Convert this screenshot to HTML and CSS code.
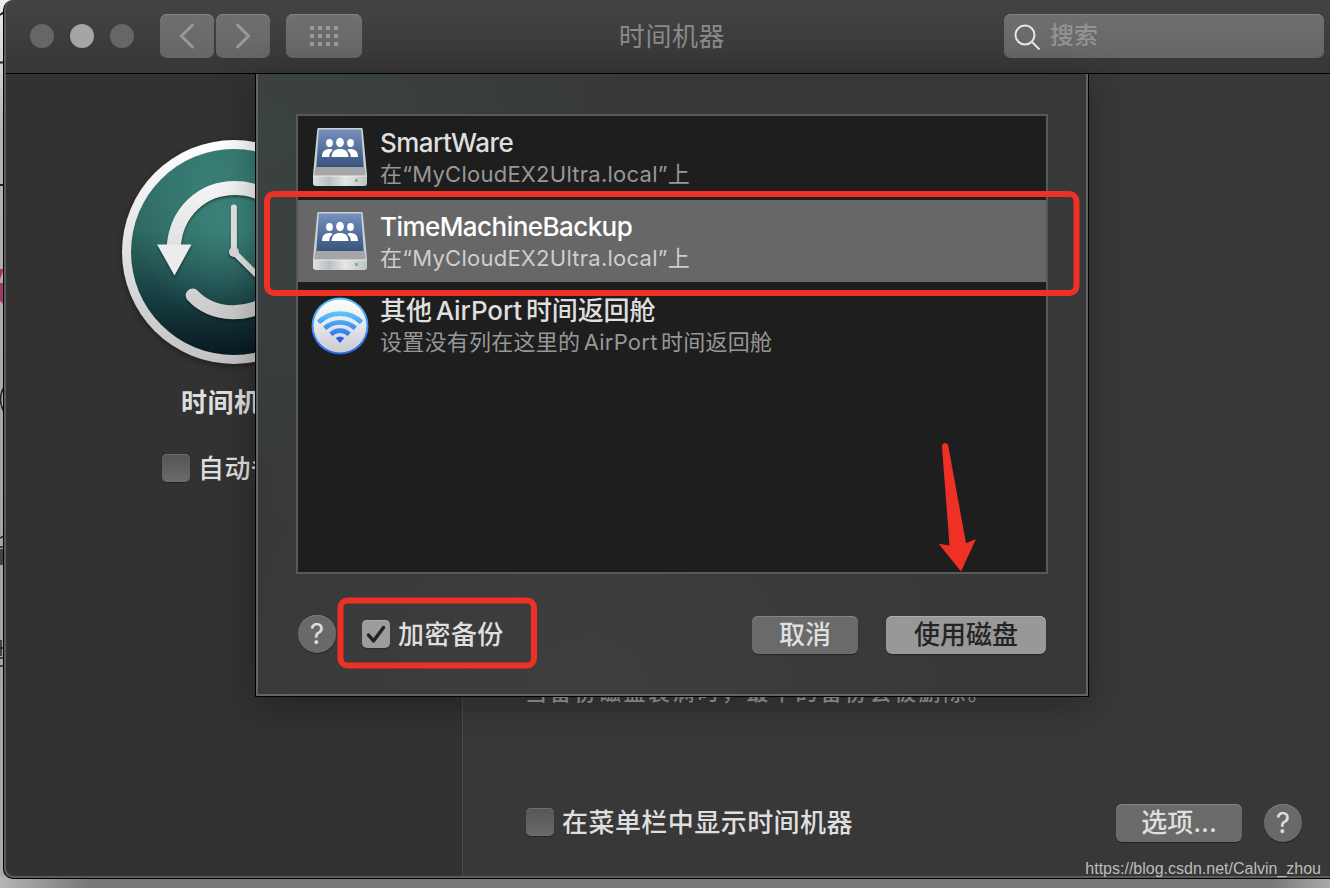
FILE: index.html
```
<!DOCTYPE html>
<html lang="zh-CN">
	<head>
		<meta charset="UTF-8">
		<title>时间机器</title>
		<link rel="stylesheet" href="styles.css">
	</head>
	<body>
		<svg class="behind" width="4" height="888" viewBox="0 0 4 888">
			<path d="M0 15l4-3M0 62.500h4M0 185h4" stroke="#222" stroke-width="2"/>
			<path d="M0 269h4l-4 10zM0 283h4v22l-4-4z" fill="#a03a68"/>
			<path d="M4 387q-7 12 0 25M0 538l4-2M0 547h4M1 549v16M3 549v16M0 648h4M1 640v16M0 658h4v8h-4" fill="none" stroke="#222" stroke-width="1.500"/>
		</svg>
		<div class="window">
			<div class="toolbar">
				<div class="lights"><i></i><i class="on"></i><i></i></div>
				<div class="nav">
					<span class="tool"><svg width="54" height="44"><path d="M32.500 11L21.500 22l11 11"/></svg></span>
					<span class="tool"><svg width="54" height="44"><path d="M21.500 11l11 11-11 11"/></svg></span>
				</div>
				<span class="tool grid"><svg width="76" height="44"><path d="M24 14h29M24 22h29M24 30h29" stroke-dasharray="4 4"/></svg></span>
				<h1>时间机器</h1>
				<div class="search">
					<svg width="28" height="28" viewBox="0 0 28 28"><circle cx="11" cy="12" r="9.500"/><path d="M18 19l7.500 7.500"/></svg>
					<span>搜索</span>
				</div>
			</div>
			<div class="content">
				<div class="side">
					<svg class="clock" width="240" height="240" viewBox="114 132 240 240">
						<defs>
							<linearGradient id="rim" x1="0" y1="0" x2="0" y2="1">
								<stop offset="0" stop-color="#fff"/><stop offset="1" stop-color="#c3c3c3"/>
							</linearGradient>
							<linearGradient id="face" x1="0" y1="0" x2="0" y2="1">
								<stop offset="0" stop-color="#34756d"/><stop offset="0.400" stop-color="#2d6660"/><stop offset="0.650" stop-color="#1c4748"/><stop offset="1" stop-color="#071a22"/>
							</linearGradient>
							<radialGradient id="glow" cx="0.5" cy="0.35" r="0.5">
								<stop offset="0" stop-color="#479a8f" stop-opacity="0.600"/><stop offset="1" stop-color="#479a8f" stop-opacity="0"/>
							</radialGradient>
							<linearGradient id="hand" gradientUnits="userSpaceOnUse" x1="0" y1="180" x2="0" y2="320">
								<stop offset="0" stop-color="#f6f6f6"/><stop offset="1" stop-color="#c9c9c9"/>
							</linearGradient>
						</defs>
						<circle cx="234" cy="252" r="112" fill="url(#rim)"/>
						<circle cx="234" cy="252" r="103" fill="url(#face)"/>
						<circle cx="234" cy="252" r="103" fill="url(#glow)"/>
						<g class="hands">
							<path d="M173.700 247C176 212 202 188 235 188c34 0 61 28 61 62" fill="none" stroke="url(#hand)" stroke-width="14"/>
							<path d="M157 244.500h34.500L174.500 275.500z" fill="#ececec"/>
							<path d="M192.700 295.500C213 317 250 318 275 297" fill="none" stroke="url(#hand)" stroke-width="14" stroke-linecap="round"/>
							<path d="M233.900 207.500V252l30 30" fill="none" stroke="#e4e4e4" stroke-width="6" stroke-linecap="round"/>
							<circle cx="234" cy="252" r="5" fill="#dcdcdc"/>
						</g>
					</svg>
					<b>时间机器</b>
					<label><i class="check"></i>自动备份</label>
				</div>
				<div class="main">
					<p>当备份磁盘装满时，最早的备份会被删除。</p>
					<div class="bottom">
						<label><i class="check"></i>在菜单栏中显示时间机器</label>
						<span class="btn options">选项...</span>
						<span class="help">?</span>
					</div>
				</div>

				<div class="sheet">
					<ul class="disks">
						<li>
							<svg width="60" height="62" viewBox="0 0 60 62">
								<defs>
									<linearGradient id="blue" x1="0" y1="0" x2="0" y2="1">
										<stop offset="0" stop-color="#7590bc"/><stop offset="1" stop-color="#38557f"/>
									</linearGradient>
									<linearGradient id="front" x1="0" y1="0" x2="1" y2="0">
										<stop offset="0" stop-color="#dce1e3"/><stop offset="0.300" stop-color="#b9bfc1"/><stop offset="0.600" stop-color="#e6e6e6"/><stop offset="1" stop-color="#bcc3c2"/>
									</linearGradient>
									<g id="drive">
										<path d="M8.500 2h43q1 0 1.200 1L57 49v8q0 3-3 3H6q-3 0-3-3v-8L7.300 3q.2-1 1.200-1z" fill="#c9d2d5"/>
										<path d="M5.500 40.500h49L56 51H4z" fill="#a6a6a6"/>
										<path d="M8.800 3.500h42.400L53.700 41H6.300z" fill="url(#blue)"/>
										<path d="M3.300 50h53.400v7q0 2.500-2.700 2.500H6q-2.700 0-2.700-2.500z" fill="url(#front)"/>
										<path d="M3.500 50h53" stroke="#eee"/>
										<path d="M45 53h3v3h-3z" fill="#7cbb70"/>
										<g fill="#fff">
											<ellipse cx="19.500" cy="17" rx="3.400" ry="4"/>
											<ellipse cx="40.500" cy="17" rx="3.400" ry="4"/>
											<path d="M12 31c0-6 3-8 8-8 2.500 0 3 1 2 2-2 1.500-2.500 3-2.800 6zM48 31c0-6-3-8-8-8-2.500 0-3 1-2 2 2 1.500 2.500 3 2.800 6z"/>
											<ellipse cx="30" cy="16.500" rx="3.900" ry="4.700"/>
											<path d="M21.500 31c.5-6 3.500-8 8.500-8s8 2 8.500 8z"/>
										</g>
									</g>
								</defs>
								<use href="#drive"/>
							</svg>
							<div><strong class="name">SmartWare</strong><em>在<q>“</q>MyCloudEX2Ultra.local<q>”</q>上</em></div>
						</li>
						<li class="selected">
							<svg width="60" height="62" viewBox="0 0 60 62"><use href="#drive"/></svg>
							<div><strong class="name">TimeMachineBackup</strong><em>在<q>“</q>MyCloudEX2Ultra.local<q>”</q>上</em></div>
						</li>
						<li>
							<svg width="60" height="62" viewBox="310 294 60 62">
								<defs>
									<linearGradient id="ring" x1="0" y1="0" x2="0" y2="1">
										<stop offset="0" stop-color="#58c4fa"/><stop offset="1" stop-color="#2a63ea"/>
									</linearGradient>
									<linearGradient id="plate" x1="0" y1="0" x2="0" y2="1">
										<stop offset="0" stop-color="#fff"/><stop offset="1" stop-color="#cbccd4"/>
									</linearGradient>
									<linearGradient id="wave" gradientUnits="userSpaceOnUse" x1="0" y1="311" x2="0" y2="343">
										<stop offset="0" stop-color="#5bcaf8"/><stop offset="1" stop-color="#2460ec"/>
									</linearGradient>
								</defs>
								<circle cx="340" cy="326" r="28.500" fill="url(#ring)"/>
								<circle cx="340" cy="326" r="26.500" fill="url(#plate)"/>
								<g fill="none" stroke="url(#wave)" stroke-width="4.800">
									<path d="M318.500 322.300a31 31 0 0 1 43 0"/>
									<path d="M324.700 328.300a22.500 22.500 0 0 1 30.600 0"/>
									<path d="M330.800 334.300a13.500 13.500 0 0 1 18.400 0"/>
								</g>
								<path d="M335.700 338q4.300-3 8.600 0L340 343z" fill="#2460ec"/>
							</svg>
							<div><strong class="other">其他 AirPort 时间返回舱</strong><em class="hint">设置没有列在这里的 AirPort 时间返回舱</em></div>
						</li>
					</ul>
					<div class="actions">
						<span class="help">?</span>
						<label><i class="check checked"><svg width="28" height="28"><path d="M6.500 15l5 6L21.500 7.500"/></svg></i>加密备份</label>
						<span class="btn cancel">取消</span>
						<span class="btn use">使用磁盘</span>
					</div>
				</div>
			</div>
		</div>

		<svg class="marks" width="1330" height="888">
			<rect x="267" y="194" width="809.500" height="99" rx="7"/>
			<rect x="340.500" y="600.500" width="193.500" height="65" rx="7"/>
			<path d="M942 447q0-4 3-4t3.500 4L966 543.300l10-4.300-15 32.500-22.300-27.800 10.800 1.800z"/>
		</svg>
		<span class="watermark">https://blog.csdn.net/Calvin_zhou</span>
	</body>
</html>
```
FILE: styles.css
```
*{
	box-sizing: border-box;
}
body{
	margin: 0;
	height: 888px;
	overflow: hidden;
	position: relative;
	background: linear-gradient(90deg,#b5b5b5,#777 90px,#777 1270px,#aaa) 0 100%/100% 12px no-repeat,
		linear-gradient(#eee,#b4b4b4 130px,#a5a5a5 500px,#aaa);
	font: 26px/32px Inter,"Noto Sans CJK SC",sans-serif;
	color: #dfdfdf;
}
svg{
	display: block;
}
i,em{
	font-style: normal;
}
.behind{
	position: absolute;
	left: 0;
	top: 0;
}
.window{
	position: relative;
	width: 1340px;
	height: 879px;
	margin-left: 3px;
	padding: 0 0 2px 2px;
	border: 1px solid #000;
	border-top: 0;
	border-radius: 10px;
	background: #5b5b5b;
	overflow: hidden;
}
.toolbar{
	display: flex;
	align-items: center;
	width: 1324px;
	height: 74px;
	padding: 0 6px 2px 24px;
	border-bottom: 1px solid #000;
	background: linear-gradient(#444,#363636);
	border-radius: 8px 0 0 0;
}
.lights{
	display: flex;
	gap: 16px;
	margin-right: 26px;
}
.lights i{
	width: 24px;
	height: 24px;
	border-radius: 50%;
	background: #666;
}
.lights .on{
	background: #a5a5a5;
}
.nav{
	display: flex;
	gap: 2px;
	margin-right: 16px;
}
.tool,.search{
	height: 44px;
	border-radius: 7px;
	background: linear-gradient(#6f6f6f,#666);
	box-shadow: inset 0 1px #858585;
}
.tool path{
	fill: none;
	stroke: #999;
	stroke-width: 3;
	stroke-linecap: round;
}
.grid path{
	stroke-width: 4;
	stroke-linecap: butt;
}
h1{
	flex: 1;
	margin: 0;
	padding: 2px 22px 0 0;
	text-align: center;
	font-size: 26px;
	font-weight: 400;
	letter-spacing: .6px;
	color: #8a8a8a;
}
.search{
	display: flex;
	align-items: center;
	width: 320px;
	padding-left: 10px;
	font-size: 24px;
	font-weight: 500;
	color: #939393;
}
.search svg{
	margin: 2px 8px 0 0;
	fill: none;
	stroke: #e8e8e8;
	stroke-width: 2;
}
.content{
	position: relative;
	display: flex;
	width: 1324px;
	height: 802px;
}
.side{
	width: 457px;
	padding-top: 58px;
	border-right: 1px solid #4a4a4a;
	background: #323232;
	border-radius: 0 0 0 8px;
}
.clock{
	margin-left: 108px;
	filter: drop-shadow(0 2px 3px rgba(0,0,0,.4));
}
.hands{
	filter: drop-shadow(0 2px 1px rgba(0,0,0,.4));
}
.side b{
	display: block;
	width: 104px;
	margin: 15px 0 34px 175px;
	font-weight: 700;
	letter-spacing: .5px;
	white-space: nowrap;
}
label{
	display: flex;
	align-items: center;
	white-space: nowrap;
	font-weight: 500;
	letter-spacing: .45px;
}
.side label{
	margin-left: 156px;
}
.check{
	width: 28px;
	height: 28px;
	margin: 0 8px 2px 0;
	border-radius: 5px;
	background: linear-gradient(#555,#6b6b6b);
	box-shadow: inset 0 1px #707070,0 1px 1px rgba(0,0,0,.3);
}
.checked{
	background: #9c9c9c;
	box-shadow: inset 0 1px #adadad,0 1px 1px rgba(0,0,0,.3);
}
.checked path{
	fill: none;
	stroke: #222;
	stroke-width: 3.5;
	stroke-linecap: round;
	stroke-linejoin: round;
}
.main{
	flex: 1;
	display: flex;
	flex-direction: column;
	justify-content: flex-end;
	background: #383838;
}
.main p{
	margin: 0 0 96px 62px;
	font-size: 22px;
	font-weight: 500;
	letter-spacing: 2.6px;
	color: #9b9b9b;
	white-space: nowrap;
}
.bottom{
	display: flex;
	align-items: center;
	padding: 0 28px 34px 63px;
}
.btn{
	height: 38px;
	border-radius: 6px;
	background: #6a6a6a;
	box-shadow: inset 0 1px #868686,0 1px 1px rgba(0,0,0,.4);
	line-height: 38px;
	font-weight: 500;
	text-align: center;
}
.options{
	width: 126px;
	margin: 0 22px 0 auto;
}
.help{
	width: 38px;
	height: 38px;
	border-radius: 50%;
	background: #696969;
	box-shadow: inset 0 1px #7d7d7d,0 1px 1px rgba(0,0,0,.4);
	line-height: 39px;
	font-size: 28px;
	text-align: center;
}
.sheet{
	position: absolute;
	left: 249px;
	top: 0;
	width: 834px;
	height: 623px;
	padding: 40px 38px 0;
	border: 1px solid #000;
	border-top: 0;
	background: radial-gradient(circle at 0 60px,rgba(62,73,73,.6),transparent 400px),
		radial-gradient(circle at 40% 100%,#3e3e3e,transparent 400px),#373838;
	box-shadow: inset 2px 0 #626464,inset -2px -2px #626464,0 8px 36px rgba(0,0,0,.3);
}
.disks{
	width: 752px;
	height: 460px;
	margin: 0 0 0 2px;
	padding: 0;
	border: 2px solid #575959;
	background: #1e1e1e;
	list-style: none;
}
.disks li{
	display: flex;
	height: 82px;
	margin-bottom: 2px;
	padding: 10px 0 0 12px;
}
.disks .selected{
	background: #676767;
}
.disks div{
	margin: 1px 0 0 10px;
}
.disks strong,.disks em{
	display: block;
	white-space: nowrap;
}
.disks strong{
	font-weight: 500;
}
.disks .name{
	letter-spacing: -.55px;
}
.disks .other{
	letter-spacing: -.1px;
	word-spacing: -3px;
}
.disks em{
	font-size: 22px;
	line-height: 30px;
	letter-spacing: .25px;
	color: #979797;
}
.disks .hint{
	letter-spacing: .25px;
	word-spacing: -3px;
}
.disks q{
	quotes: none;
}
.disks .selected strong{
	color: #fff;
}
.disks .selected em{
	color: #cecece;
}
.actions{
	display: flex;
	align-items: center;
	padding: 40px 4px 0 4px;
}
.actions label{
	margin: 2px auto 0 26px;
}
.cancel{
	width: 106px;
	margin: 2px 28px 0 0;
}
.use{
	width: 160px;
	margin-top: 2px;
	background: #989898;
	box-shadow: inset 0 1px #adadad,0 1px 1px rgba(0,0,0,.4);
	color: #242424;
}
/* red pen marks over the window */
.marks{
	position: absolute;
	left: 0;
	top: 0;
	fill: #ee3124;
}
.marks rect{
	fill: none;
	stroke: #ee3124;
	stroke-width: 6;
}
.watermark{
	position: absolute;
	right: 9px;
	top: 859px;
	font: 16px/20px "Liberation Sans",sans-serif;
	color: #bdbdbd;
}
```
